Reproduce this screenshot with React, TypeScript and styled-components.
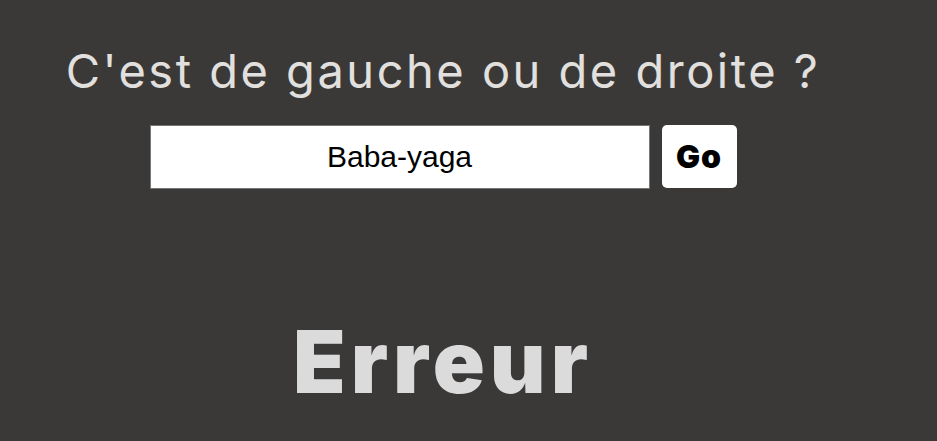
import React from "react";
import styled, { createGlobalStyle } from "styled-components";

const Global = createGlobalStyle`
  html, body { margin: 0; padding: 0; background: #3b3938; }
  body { width: 937px; height: 441px; overflow: hidden; }
`;

const Page = styled.main`
  width: 886px;
  display: flex;
  flex-direction: column;
  align-items: center;
`;

const Title = styled.h1`
  margin: 41px 0 0;
  font-family: Inter, "Open Sans", sans-serif;
  font-weight: 400;
  font-size: 47px;
  line-height: 60px;
  color: #e2e0de;
  letter-spacing: 2.5px;
  white-space: nowrap;
`;

const Form = styled.form`
  margin-top: 24px;
  display: flex;
  gap: 12px;
  align-items: flex-start;
`;

const Input = styled.input`
  box-sizing: border-box;
  width: 500px;
  height: 64px;
  border: 1px solid #767676;
  background: #fff;
  font-family: "Liberation Sans", Arial, sans-serif;
  font-size: 30px;
  color: #000;
  text-align: center;
  outline: none;
  padding: 0;
`;

const Button = styled.button`
  box-sizing: border-box;
  width: 75px;
  height: 63px;
  border: none;
  border-radius: 5px;
  background: #fff;
  font-family: Inter, sans-serif;
  font-weight: 900;
  font-size: 32px;
  letter-spacing: 1px;
  color: #000;
  padding: 0;
`;

const Result = styled.div`
  margin-top: 128px;
  font-family: Inter, sans-serif;
  font-weight: 900;
  font-size: 86px;
  line-height: 90px;
  letter-spacing: 5px;
  color: #dcdbdb;
`;

export default function App() {
  return (
    <>
      <Global />
      <Page>
        <Title>C'est de gauche ou de droite ?</Title>
        <Form onSubmit={(e) => e.preventDefault()}>
          <Input defaultValue="Baba-yaga" />
          <Button type="submit">Go</Button>
        </Form>
        <Result>Erreur</Result>
      </Page>
    </>
  );
}
